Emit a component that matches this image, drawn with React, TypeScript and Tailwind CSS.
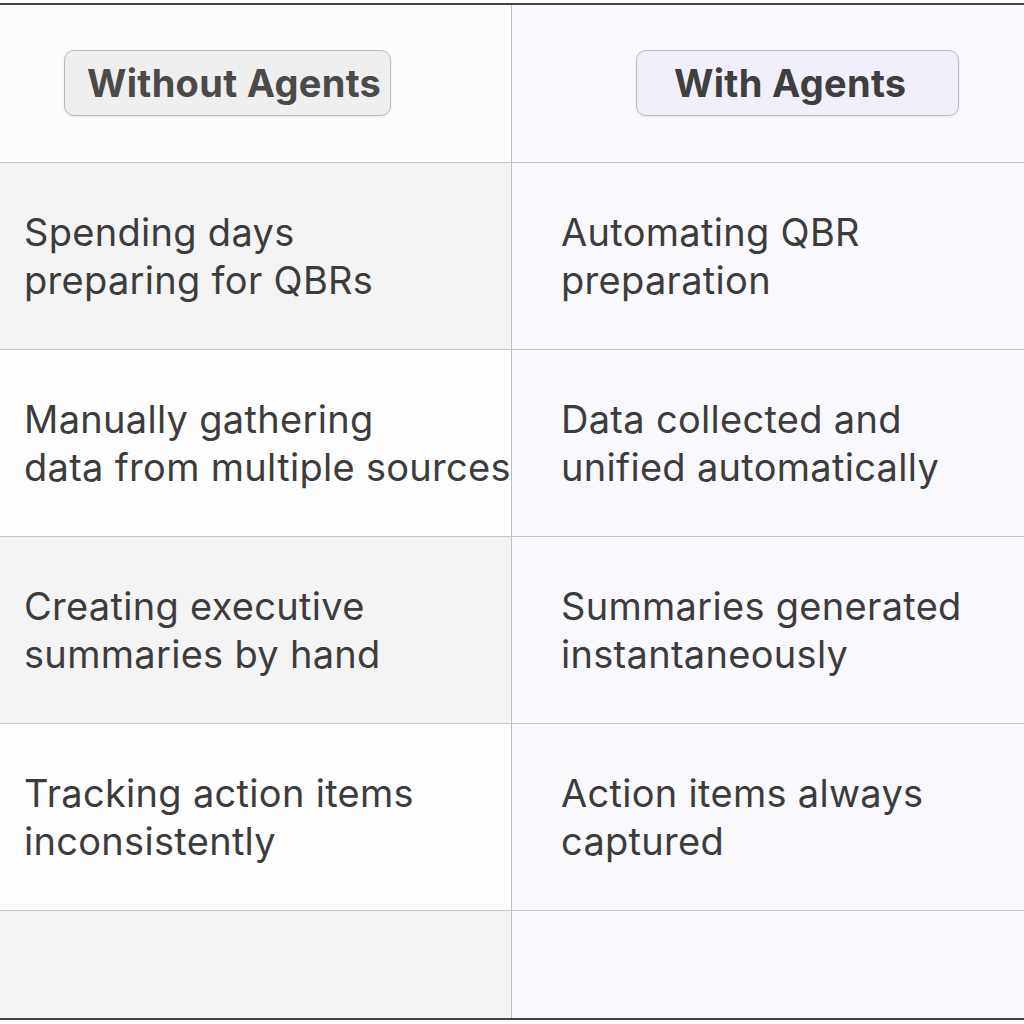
const rows = [
    { without: ['Spending days', 'preparing for QBRs'], withA: ['Automating QBR', 'preparation'] },
    { without: ['Manually gathering', 'data from multiple sources'], withA: ['Data collected and', 'unified automatically'] },
    { without: ['Creating executive', 'summaries by hand'], withA: ['Summaries generated', 'instantaneously'] },
    { without: ['Tracking action items', 'inconsistently'], withA: ['Action items always', 'captured'] },
];

function Lines({ lines }: { lines: string[] }) {
    return (
        <p className="text-[38px] leading-[48px] tracking-[0.3px] text-[#3c3c3c]">
            {lines.map((l) => (
                <span key={l} className="block whitespace-nowrap">{l}</span>
            ))}
        </p>
    );
}

export default function App() {
    return (
        <div className="w-[1024px] h-[1024px] bg-white pt-[3px] overflow-hidden" style={{ fontFamily: 'Inter, "Noto Sans", sans-serif' }}>
            <div className="border-t-2 border-b-2 border-[#444]">
                <div className="grid grid-cols-[512px_1fr] h-[158px] border-b border-[#c6c6c6]">
                    <div className="bg-[#fcfcfc] border-r border-[#bdbdbd] pl-[64px] pt-[45px]">
                        <div className="w-[327px] h-[66px] rounded-[10px] border border-[#bcbcbc] bg-[#efefef] shadow-[0_1px_3px_rgba(0,0,0,0.08)] flex items-center pl-[22px]">
                            <span className="text-[38px] font-bold text-[#4a4a4a] tracking-[0.3px]">Without Agents</span>
                        </div>
                    </div>
                    <div className="bg-[#f9f8fd] pl-[124px] pt-[45px]">
                        <div className="w-[323px] h-[66px] rounded-[10px] border border-[#bdbcc6] bg-[#f1eff9] shadow-[0_1px_3px_rgba(0,0,0,0.08)] flex items-center pl-[37px]">
                            <span className="text-[38px] font-bold text-[#3e3e3e] tracking-[0.3px]">With Agents</span>
                        </div>
                    </div>
                </div>
                {rows.map((r, i) => (
                    <div key={i} className="grid grid-cols-[512px_1fr] h-[187px] border-b border-[#c6c6c6]">
                        <div className={`${i % 2 === 0 ? 'bg-[#f4f4f4]' : 'bg-[#fdfdfd]'} border-r border-[#bdbdbd] pl-[24px] flex items-center`}>
                            <Lines lines={r.without} />
                        </div>
                        <div className="bg-[#f9f8fd] pl-[49px] flex items-center">
                            <Lines lines={r.withA} />
                        </div>
                    </div>
                ))}
                <div className="grid grid-cols-[512px_1fr] h-[107px]">
                    <div className="bg-[#f4f4f4] border-r border-[#bdbdbd]" />
                    <div className="bg-[#f9f8fd]" />
                </div>
            </div>
        </div>
    );
}
